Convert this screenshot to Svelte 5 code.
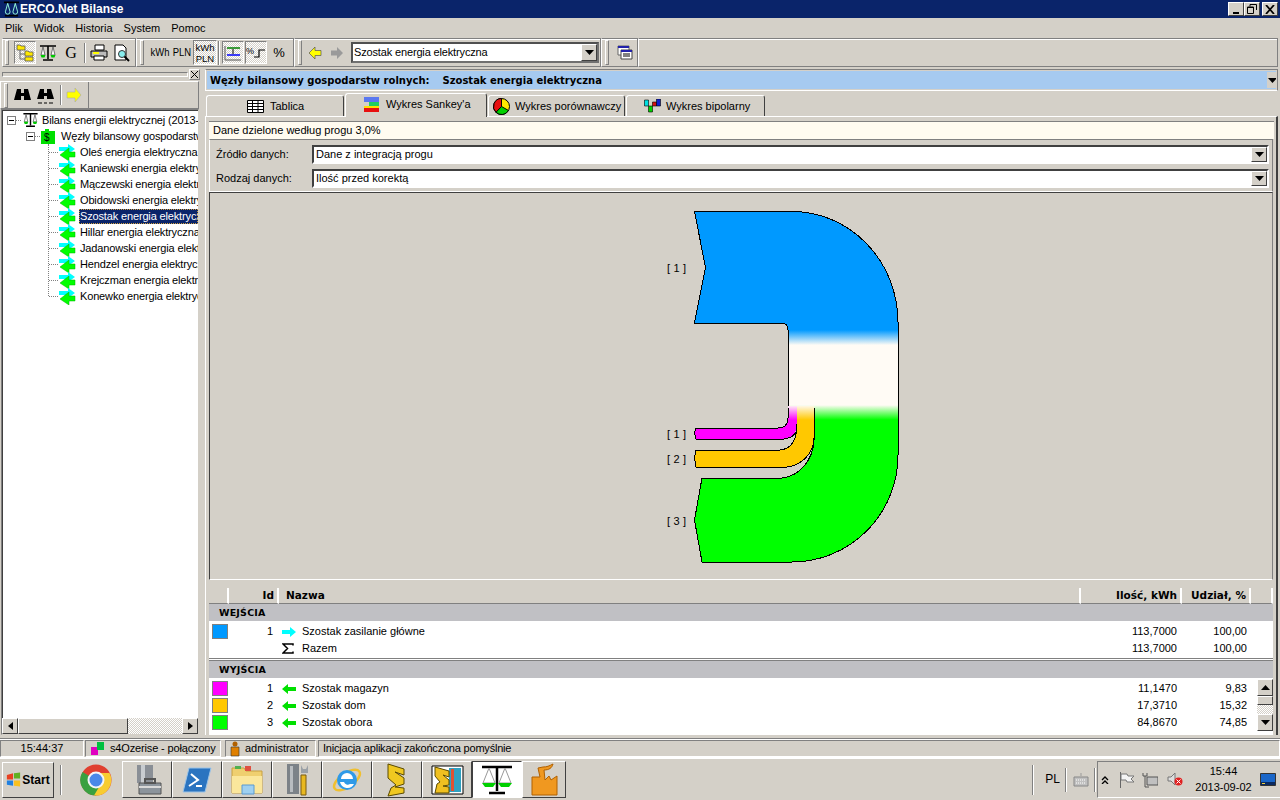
<script>
  const leaves = [
    'Oleś energia elektryczna',
    'Kaniewski energia elektryczna',
    'Mączewski energia elektryczna',
    'Obidowski energia elektryczna',
    'Szostak energia elektryczna',
    'Hillar energia elektryczna',
    'Jadanowski energia elektryczna',
    'Hendzel energia elektryczna',
    'Krejczman energia elektryczna',
    'Konewko energia elektryczna'
  ];
  const outputs = [
    { color: '#ff00ff', id: 1, name: 'Szostak magazyn', qty: '11,1470', pct: '9,83' },
    { color: '#ffc800', id: 2, name: 'Szostak dom', qty: '17,3710', pct: '15,32' },
    { color: '#00ff00', id: 3, name: 'Szostak obora', qty: '84,8670', pct: '74,85' }
  ];
  const menu = ['Plik', 'Widok', 'Historia', 'System', 'Pomoc'];
</script>

{#snippet scales(w, h)}
  <svg width={w} height={h} viewBox="0 0 18 18">
    <path d="M1 2h16M9 2v13M4 16h10" stroke="#000" stroke-width="1.6" fill="none" />
    <path d="M4 3L2 11h4zM14 3l-2 8h4z" fill="#fff" stroke="#555" stroke-width=".8" />
    <path d="M1.500 11h5l-1 2.500h-3zM11.500 11h5l-1 2.500h-3z" fill="#00c800" />
  </svg>
{/snippet}

{#snippet dropArrow()}
  <svg width="9" height="5" viewBox="0 0 9 5"><path d="M0 0h9L4.500 5z" fill="#000" /></svg>
{/snippet}

{#snippet leafIcon()}
  <svg width="18" height="17" viewBox="0 0 18 17">
    <path d="M1 3h9V0l7 5-7 5V7H1z" fill="#00ffff" />
    <path d="M17 8h-6V4L2 11l9 6v-4h6z" fill="#00ff00" stroke="#00b000" stroke-width=".5" />
  </svg>
{/snippet}

<div class="app">
  <header class="titlebar">
    <svg width="17" height="16" viewBox="0 0 18 16">
      <path d="M1 1h16M2 15h14" stroke="#000" stroke-width="2" />
      <path d="M5 2L2.500 11a2.500 2.500 0 0 0 5 0zM13 2l-2.500 9a2.500 2.500 0 0 0 5 0z" fill="#0a246a" stroke="#9fd" stroke-width="1" />
    </svg>
    <span class="title">ERCO.Net Bilanse</span>
    <div class="wincontrols">
      <button class="winbtn"><i class="min"></i></button>
      <button class="winbtn"><svg width="10" height="10" viewBox="0 0 10 10"><path d="M3 .5h6.500V6M3 .5v2M.5 3h6v6.500h-6zM.5 3.500h6" fill="none" stroke="#000" /></svg></button>
      <button class="winbtn close"><svg width="10" height="9" viewBox="0 0 10 9"><path d="M1 0l8 9M9 0L1 9" stroke="#000" stroke-width="1.800" /></svg></button>
    </div>
  </header>

  <nav class="menubar">
    {#each menu as item}<span>{item}</span>{/each}
  </nav>

  <div class="toolbar">
    <div class="tbgroup g1">
      <i class="handle"></i>
      <button class="tb pressed">
        <svg width="18" height="18" viewBox="0 0 18 18"><path d="M4 6v9h5M4 10h5" stroke="#666" fill="none" /><path d="M1 1h3l1 1h4v4H1zM9 7h3l1 1h4v4H9zM9 13h8v4H9z" fill="#ffe800" stroke="#555" stroke-width=".8" /></svg>
      </button>
      <button class="tb">{@render scales(18, 18)}</button>
      <button class="tb gletter">G</button>
      <i class="sep"></i>
      <button class="tb">
        <svg width="18" height="17" viewBox="0 0 18 17"><path d="M5 1h9v5H5z" fill="#fff" stroke="#000" /><path d="M1 7h16v6H1z" fill="#bbb" stroke="#000" /><path d="M4 12h10v4H4z" fill="#fff" stroke="#000" /><path d="M3 9h6" stroke="#ff0" stroke-width="2" /></svg>
      </button>
      <button class="tb">
        <svg width="18" height="18" viewBox="0 0 18 18"><path d="M2 1h8l3 3v12H2z" fill="#fff" stroke="#000" /><circle cx="9" cy="10" r="3.500" fill="#8ee" stroke="#333" /><path d="M11.500 12.500L16 17" stroke="#000" stroke-width="2" /></svg>
      </button>
    </div>
    <div class="tbgroup g2">
      <i class="handle"></i>
      <button class="tb txt">kWh</button>
      <button class="tb txt">PLN</button>
      <button class="tb txt two pressed">kWh<br />PLN</button>
      <i class="thin"></i>
      <button class="tb pressed wide">
        <svg width="18" height="16" viewBox="0 0 18 16"><path d="M1 1v14h16" stroke="#555" fill="none" /><path d="M3 3h13" stroke="#008000" stroke-width="1.500" /><path d="M3 10h13" stroke="#00f" stroke-width="1.500" /><path d="M9 4v5" stroke="#000" /></svg>
      </button>
      <button class="tb pressed wide">
        <svg width="20" height="16" viewBox="0 0 20 16"><text x="0" y="9" font-size="9" font-family="Liberation Sans" fill="#000">%</text><path d="M8 12h5V5h6" stroke="#000" stroke-width="1.200" fill="none" /></svg>
      </button>
      <button class="tb wide pct">%</button>
    </div>
    <div class="tbgroup g3">
      <i class="handle"></i>
      <button class="tb">
        <svg width="14" height="12" viewBox="0 0 14 12"><path d="M13 3.500H7V0L1 6l6 6V8.500h6z" fill="#ffff00" stroke="#555" stroke-width=".7" /></svg>
      </button>
      <button class="tb">
        <svg width="14" height="12" viewBox="0 0 14 12"><path d="M1 3.500h6V0l6 6-6 6V8.500H1z" fill="#9a9a9a" /></svg>
      </button>
      <div class="combo top">
        <span>Szostak energia elektryczna</span>
        <button class="drop">{@render dropArrow()}</button>
      </div>
    </div>
    <div class="tbgroup g4">
      <i class="handle"></i>
      <button class="tb">
        <svg width="16" height="15" viewBox="0 0 16 15"><path d="M1 1h11v9H1z" fill="#fff" stroke="#666" /><path d="M1 1h11v2H1z" fill="#22a" /><path d="M4 5h11v9H4z" fill="#fff" stroke="#444" /><path d="M4 5h11v2H4z" fill="#22a" /><path d="M6 9h7M6 11h7" stroke="#000" /></svg>
      </button>
    </div>
    <div class="tbgroup rest"></div>
  </div>

  <main class="body">
    <aside class="side">
      <div class="dockbar">
        <i class="dockgrip"></i>
        <button class="dockclose"><svg width="7" height="7" viewBox="0 0 7 7"><path d="M0 0l7 7M7 0L0 7" stroke="#000" /></svg></button>
      </div>
      <div class="findbar">
        <div class="findgroup">
          <i class="handle"></i>
          <svg class="bino" width="17" height="14" viewBox="0 0 17 14"><path d="M3 1h4v4h3V1h4l3 11h-7V8H7v4H0z" fill="#000" /></svg>
          <svg class="bino b2" width="17" height="17" viewBox="0 0 17 17"><path d="M3 1h4v4h3V1h4l3 10h-7V8H7v3H0z" fill="#000" /><path d="M1 15h4M7 15h3M12 15h4" stroke="#000" /></svg>
          <i class="sep"></i>
          <svg width="16" height="14" viewBox="0 0 16 14"><path d="M1 4h8V0l6 7-6 7v-4H1z" fill="#ffff00" stroke="#aaa" stroke-width=".6" /></svg>
        </div>
      </div>
      <div class="tree">
        <div class="treelist">
          <div class="node lvl0">
            <span class="box"></span><i class="dash"></i>
            {@render scales(17, 16)}
            <span class="label">Bilans energii elektrycznej (2013-09-02)</span>
          </div>
          <div class="node lvl1">
            <span class="box"></span><i class="dash"></i>
            <svg width="14" height="15" viewBox="0 0 14 15"><path d="M0 2h4V0h4v2h6v13H0z" fill="#00e000" /><text x="3" y="12" font-size="10" font-family="Liberation Sans" fill="#000">$</text></svg>
            <span class="label">Węzły bilansowy gospodarstw rolnych</span>
          </div>
          <div class="leaves">
            {#each leaves as leaf, i}
              <div class="node leaf">
                <i class="dash long"></i>
                {@render leafIcon()}
                <span class="label" class:selected={i === 4}>{leaf}</span>
              </div>
            {/each}
          </div>
        </div>
        <div class="hscroll">
          <button class="sbtn"><svg width="5" height="8" viewBox="0 0 5 8"><path d="M5 0v8L0 4z" /></svg></button>
          <div class="hthumb"></div>
          <div class="htrack"></div>
          <button class="sbtn"><svg width="5" height="8" viewBox="0 0 5 8"><path d="M0 0v8l5-4z" /></svg></button>
        </div>
      </div>
    </aside>

    <section class="content">
      <div class="headerbar">
        <b>Węzły bilansowy gospodarstw rolnych:</b>
        <b class="nodename">Szostak energia elektryczna</b>
        <button class="headerdrop">{@render dropArrow()}</button>
      </div>

      <div class="tabs">
        <div class="tab t1">
          <svg width="17" height="13" viewBox="0 0 17 13"><path d="M.5.5h16v12H.5zM.5 3.500h16M.5 6.500h16M.5 9.500h16M5.500.5v12M11 .5v12" fill="#fff" stroke="#000" /></svg>
          <span>Tablica</span>
        </div>
        <div class="tab t2 active">
          <svg width="17" height="17" viewBox="0 0 17 17"><path d="M1 1h15v5H1z" fill="#5a78f0" /><path d="M6 6h10v4H6z" fill="#20d060" /><path d="M1 10h15v2H1z" fill="#ffe000" /><path d="M1 12h15v4H1z" fill="#e81010" /></svg>
          <span>Wykres Sankey'a</span>
        </div>
        <div class="tab t3">
          <svg width="17" height="17" viewBox="0 0 17 17"><circle cx="8.500" cy="8.500" r="8" fill="#ffe800" stroke="#000" /><path d="M8.500 8.500V.5A8 8 0 0 0 3 14.300z" fill="#e81010" stroke="#000" /><path d="M8.500 8.500L3 14.300A8 8 0 0 0 15.500 12.500z" fill="#00d000" stroke="#000" /></svg>
          <span>Wykres porównawczy</span>
        </div>
        <div class="tab t4">
          <svg width="17" height="14" viewBox="0 0 17 14"><path d="M.5 1h4v6h-4z" fill="#00e0e0" stroke="#000" stroke-width=".6" /><path d="M4.500 7h4v6h-4z" fill="#00d000" stroke="#000" stroke-width=".6" /><path d="M8.500 3h4v4h-4z" fill="#d81010" stroke="#000" stroke-width=".6" /><path d="M12.500 0h4v7h-4z" fill="#1020d0" stroke="#000" stroke-width=".6" /></svg>
          <span>Wykres bipolarny</span>
        </div>
      </div>

      <div class="page">
        <div class="info">Dane dzielone według progu 3,0%</div>

        <div class="filters">
          <div class="filter">
            <span class="flabel">Źródło danych:</span>
            <div class="combo">
              <span>Dane z integracją progu</span>
              <button class="drop">{@render dropArrow()}</button>
            </div>
          </div>
          <div class="filter">
            <span class="flabel">Rodzaj danych:</span>
            <div class="combo">
              <span>Ilość przed korektą</span>
              <button class="drop">{@render dropArrow()}</button>
            </div>
          </div>
        </div>

        <div class="canvas">
          <svg width="1062" height="386" viewBox="210 193 1062 386" shape-rendering="crispEdges">
            <defs>
              <linearGradient id="mainfill" gradientUnits="userSpaceOnUse" x1="0" y1="211" x2="0" y2="562">
                <stop offset="0.339" stop-color="#0099ff" />
                <stop offset="0.382" stop-color="#fffbf5" />
                <stop offset="0.553" stop-color="#fffbf5" />
                <stop offset="0.595" stop-color="#00ff00" />
              </linearGradient>
              <linearGradient id="pinkfill" gradientUnits="userSpaceOnUse" x1="0" y1="405" x2="0" y2="420">
                <stop offset="0" stop-color="#fffbf5" />
                <stop offset="1" stop-color="#ff00ff" />
              </linearGradient>
              <linearGradient id="orangefill" gradientUnits="userSpaceOnUse" x1="0" y1="405" x2="0" y2="420">
                <stop offset="0" stop-color="#fffbf5" />
                <stop offset="1" stop-color="#ffc800" />
              </linearGradient>
            </defs>

            <path
              d="M788 408V330Q788 323 781 323H694.500L705.500 267.500L694.500 211.500H792A106 111 0 0 1 898 322V455A106 107 0 0 1 792 562H702L694.500 520L702 478H782C800 476 813 460 814 440V408"
              fill="url(#mainfill)" stroke="#000" stroke-width="1"
            />
            <path d="M788 406V418Q788 428 778 428H696L694.500 433L696 439H784Q797 437 797 424V406Z" fill="url(#pinkfill)" />
            <path d="M788 408V418Q788 428 778 428H696L694.500 433L696 439H784Q797 437 797 427" fill="none" stroke="#000" />
            <path d="M797 406V422Q797 448 780 450H696L694.500 458L696 467H787C803 465 814 452 814 438V406Z" fill="url(#orangefill)" />
            <path d="M797 424C797 442 790 449 780 450H696L694.500 458L696 467H787C803 465 814 452 814 438V408" fill="none" stroke="#000" />

            <g class="sk-label" shape-rendering="auto">
              <text x="667" y="272">[ 1 ]</text>
              <text x="667" y="438">[ 1 ]</text>
              <text x="667" y="463">[ 2 ]</text>
              <text x="667" y="525">[ 3 ]</text>
            </g>
          </svg>
        </div>

        <div class="table">
          <div class="thead">
            <span></span>
            <span class="r">Id</span>
            <span>Nazwa</span>
            <span class="r">Ilość, kWh</span>
            <span class="r">Udział, %</span>
            <span></span>
          </div>

          <div class="section">WEJŚCIA</div>
          <div class="rows">
            <div class="row">
              <i class="swatch blue"></i>
              <span class="r">1</span>
              <svg class="ricon" width="14" height="10" viewBox="0 0 14 10"><path d="M0 3h8V0l6 5-6 5V7H0z" fill="#00ffff" /></svg>
              <span>Szostak zasilanie główne</span>
              <span class="r">113,7000</span>
              <span class="r">100,00</span>
            </div>
            <div class="row">
              <i></i>
              <span></span>
              <svg class="ricon" width="12" height="11" viewBox="0 0 12 11"><path d="M11 2.500V1H1l4.500 4.500L1 10h10V8.500" fill="none" stroke="#000" stroke-width="1.500" /></svg>
              <span>Razem</span>
              <span class="r">113,7000</span>
              <span class="r">100,00</span>
            </div>
          </div>

          <div class="divider"></div>

          <div class="section">WYJŚCIA</div>
          <div class="rows out">
            {#each outputs as row}
              <div class="row">
                <i class="swatch" style="background: {row.color}"></i>
                <span class="r">{row.id}</span>
                <svg class="ricon" width="14" height="10" viewBox="0 0 14 10"><path d="M14 3H6V0L0 5l6 5V7h8z" fill="#00e000" /></svg>
                <span>{row.name}</span>
                <span class="r">{row.qty}</span>
                <span class="r">{row.pct}</span>
              </div>
            {/each}
            <div class="vscroll">
              <button class="sbtn"><svg width="9" height="5" viewBox="0 0 9 5"><path d="M0 5h9L4.500 0z" /></svg></button>
              <div class="vthumb"></div>
              <div class="vtrack"></div>
              <button class="sbtn"><svg width="9" height="5" viewBox="0 0 9 5"><path d="M0 0h9L4.500 5z" /></svg></button>
            </div>
          </div>
        </div>
      </div>
    </section>
  </main>

  <footer class="status">
    <div class="cell c1">15:44:37</div>
    <div class="cell c2">
      <svg width="15" height="15" viewBox="0 0 15 15"><path d="M1 6h7v8H1z" fill="#e000c0" /><path d="M7 1h7v8H7z" fill="#00c040" /></svg>
      <span>s4Ozerise - połączony</span>
    </div>
    <div class="cell c3">
      <svg width="10" height="16" viewBox="0 0 10 16"><circle cx="5" cy="3" r="2.500" fill="#b06000" /><path d="M1 6h8v9H1z" fill="#e08000" stroke="#333" stroke-width=".6" /></svg>
      <span>administrator</span>
    </div>
    <div class="cell c4">Inicjacja aplikacji zakończona pomyślnie</div>
  </footer>

  <div class="taskbar">
    <button class="start">
      <svg width="15" height="15" viewBox="0 0 17 16"><path d="M1 3l7-2v7H1z" fill="#e84020" /><path d="M9 1l7-1v7H9z" fill="#60b020" /><path d="M1 9h7v6l-7-1z" fill="#2080e0" /><path d="M9 9h7v7l-7-1z" fill="#f8c020" /></svg>
      <span>Start</span>
    </button>
    <i class="taskgrip"></i>
    <div class="task plain">
      <svg width="32" height="32" viewBox="0 0 32 32">
        <circle cx="16" cy="16" r="15.500" fill="#e04030" />
        <path d="M16 16L2.500 8A15.500 15.500 0 0 0 16 31.500L24 18z" fill="#3aa040" />
        <path d="M16 9H29.500A15.500 15.500 0 0 1 14 31.500L22 18z" fill="#f8cc30" />
        <circle cx="16" cy="16" r="7.500" fill="#4a88e8" stroke="#f4f4f4" stroke-width="2" />
      </svg>
    </div>
    <div class="task">
      <svg width="32" height="32" viewBox="0 0 32 32"><path d="M6 1h16v18H6z" fill="#8a8f96" /><path d="M10 1h4v18h-4z" fill="#c8ccd0" /><path d="M8 19h22v11H8z" fill="#8c949c" stroke="#555" /><path d="M14 15h10v4H14z" fill="none" stroke="#555" stroke-width="2" /><path d="M8 23h22" stroke="#d8d8d8" stroke-width="2" /></svg>
    </div>
    <div class="task">
      <svg width="30" height="30" viewBox="0 0 30 30"><path d="M7 3h22l-6 24H1z" fill="#2b74c0" stroke="#9cc4e8" /><path d="M9 9l7 6-9 6M14 21h6" stroke="#fff" stroke-width="2" fill="none" /></svg>
    </div>
    <div class="task">
      <svg width="32" height="30" viewBox="0 0 32 30"><path d="M1 3h12l2 3h16v22H1z" fill="#efcf6f" stroke="#c8a040" /><path d="M1 11h30v17H1z" fill="#fbe79c" /><path d="M11 20h12v9H11z" fill="#9fd0f0" stroke="#5a9ad0" /><path d="M4 1h6v3H4z" fill="#50b050" /><path d="M14 1h6v5h-6z" fill="#e05040" /></svg>
    </div>
    <div class="task">
      <svg width="24" height="34" viewBox="0 0 24 34"><path d="M2 1h12v30H2z" fill="#7c8288" /><path d="M5 3h3v26H5z" fill="#b8bcc0" /><path d="M16 12h5v20h-5z" fill="#e8b820" stroke="#7a5a10" /><path d="M16 2l2 4 3 0 2-4v8h-7z" fill="#9aa0a6" /></svg>
    </div>
    <div class="task">
      <svg width="32" height="32" viewBox="0 0 32 32"><ellipse cx="16" cy="16" rx="15" ry="7" transform="rotate(-35 16 16)" fill="none" stroke="#f0c030" stroke-width="2.500" /><circle cx="16" cy="16" r="10" fill="#2f9ae8" /><path d="M10 15h12a6 6 0 0 0-12 0zM9 18a7.500 7.500 0 0 0 14 2h-4a4 4 0 0 1-6-2z" fill="#fff" /></svg>
    </div>
    <div class="task">
      <svg width="24" height="34" viewBox="0 0 24 34"><path d="M3 1l16 5v6l-9-3 9 6v6l-9 3 9 1v5L3 33l3-8 5-3-8-7z" fill="#f0c820" stroke="#5a4a00" /></svg>
    </div>
    <div class="task">
      <svg width="33" height="33" viewBox="0 0 33 33"><path d="M1 3h31v28H1z" fill="#fff" stroke="#000" /><path d="M18 5h12v24H18z" fill="#30a0c0" /><path d="M4 4l14 4v6l-6-2 6 5v5l-6 1 6 1v6L4 30l2-9 3-2-5-6z" fill="#f0c020" stroke="#5a4a00" /><path d="M20 6h3v22h-3z" fill="#e05030" /></svg>
    </div>
    <div class="task active">
      <svg width="34" height="32" viewBox="0 0 34 32">
        <path d="M2 3h30M17 3v24M9 29h16" stroke="#000" stroke-width="2.500" />
        <path d="M9 4L3 19h12zM25 4l-6 15h12z" fill="#fff" stroke="#999" />
        <path d="M2 19h14l-3 4H5zM18 19h14l-3 4h-8z" fill="#00d000" />
      </svg>
    </div>
    <div class="task last">
      <svg width="30" height="34" viewBox="0 0 30 34"><path d="M3 14h8L9 5l5-1c4 0 6-1 10-3-1 4-4 6-9 6l1 10 4-4 2 4 6-4v19H3z" fill="#f09820" stroke="#b06000" /></svg>
    </div>

    <div class="tray-left">
      <i class="taskgrip"></i>
      <span class="lang">PL</span>
      <i class="traysep"></i>
      <svg class="kbd" width="16" height="14" viewBox="0 0 16 14"><path d="M8 0v3" stroke="#999" /><path d="M1 4h14v9H1z" fill="#c0c0c0" stroke="#888" /><path d="M3 7h10M3 10h10" stroke="#fff" stroke-dasharray="1 1" /></svg>
      <i class="traysep"></i>
    </div>
    <div class="tray">
      <svg width="8" height="8" viewBox="0 0 8 8"><path d="M1 4l3-3 3 3M1 8l3-3 3 3" fill="none" stroke="#000" stroke-width="1.300" /></svg>
      <svg class="t-flag" width="16" height="16" viewBox="0 0 16 16"><path d="M1.500 0v16" stroke="#666" /><path d="M2 2h6l1 2h6l-3 3 3 3H8L7 8H2z" fill="#f4f4f4" stroke="#777" /></svg>
      <svg class="t-net" width="16" height="16" viewBox="0 0 16 16"><path d="M1 1v3h4V1M3 4v11h4" fill="none" stroke="#555" /><path d="M5 5h11v8H5z" fill="#c0c0c0" stroke="#555" /></svg>
      <svg class="t-snd" width="16" height="15" viewBox="0 0 16 15"><path d="M1 5h3l4-4v12L4 9H1z" fill="#ddd" stroke="#777" /><circle cx="11.500" cy="9.500" r="4" fill="#e02020" /><path d="M9.500 7.500l4 4M13.500 7.500l-4 4" stroke="#fff" /></svg>
      <div class="clock"><span>15:44</span><span>2013-09-02</span></div>
      <svg class="t-desk" width="16" height="14" viewBox="0 0 16 14"><path d="M.5.500h15v12H.5z" fill="#1a66c8" stroke="#333" /><path d="M1 9h14v3H1z" fill="#0a2a60" /><path d="M2 10h3v1H2z" fill="#f0d040" /></svg>
    </div>
  </div>
</div>

<style>
  :global(body) { margin: 0; background: #d4d0c8; }
  button { padding: 0; margin: 0; font: inherit; color: inherit; background: #d4d0c8; }
  i { display: block; }
  svg { flex: none; }

  .app {
    width: 1280px; height: 800px; overflow: hidden; display: flex; flex-direction: column;
    background: #d4d0c8; color: #000; font: 11px/13px "Liberation Sans", Arial, sans-serif;
  }

  .titlebar { height: 18px; flex: none; background: #0a246a; display: flex; align-items: center; padding-left: 3px; }
  .title { color: #fff; font: bold 12px/18px "Liberation Sans", sans-serif; white-space: nowrap; }
  .wincontrols { margin-left: auto; display: flex; align-items: center; margin-right: 2px; }
  .winbtn {
    width: 16px; height: 14px; display: flex; align-items: center; justify-content: center; box-sizing: border-box;
    border: 1px solid; border-color: #fff #404040 #404040 #fff;
  }
  .winbtn.close { margin-left: 2px; }
  .min { width: 6px; height: 2px; background: #000; margin-top: 7px; margin-right: 1px; }

  .menubar { height: 20px; flex: none; display: flex; align-items: center; gap: 11px; padding-left: 5px; }

  .toolbar { height: 29px; flex: none; display: flex; padding-right: 2px; }
  .tbgroup {
    display: flex; align-items: center; box-sizing: border-box; height: 29px;
    border: 1px solid; border-color: #808080 #808080 #808080 #fff;
    box-shadow: inset 0 1px 0 #fff;
  }
  .g1 { width: 134px; margin-left: 2px; padding-left: 2px; }
  .g2 { width: 158px; padding-left: 3px; }
  .g3 { width: 307px; padding-left: 3px; }
  .g3 .handle { margin-right: 2px; }
  .g4 { width: 37px; padding-left: 3px; }
  .rest { flex: 1; }
  .handle {
    width: 2px; height: 23px; flex: none; border: 1px solid; border-color: #fff #808080 #808080 #fff; margin-right: 5px;
  }
  .tb {
    width: 22px; height: 23px; flex: none; border: 1px solid transparent; box-sizing: border-box;
    display: flex; align-items: center; justify-content: center; line-height: 11px;
  }
  .g1 .tb + .tb { margin-left: 1px; }
  .tb.pressed {
    border-color: #808080 #fff #fff #808080;
    background: repeating-conic-gradient(#d4d0c8 0 25%, #fff 0 50%) 0 0 / 2px 2px;
  }
  .tb.txt { font-size: 10.500px; transform: scaleX(0.9); }
  .tb.two { width: 24px; height: 25px; transform: none; font-size: 9.500px; text-align: center; }
  .tb.wide { margin-left: 1px; }
  .pct { font-size: 13px; }
  .gletter { font: 16px "Liberation Serif", serif; }
  .sep { width: 1px; height: 20px; flex: none; background: #808080; border-right: 1px solid #fff; margin: 0 2px; }
  .thin { width: 1px; height: 24px; flex: none; background: #808080; border-right: 1px solid #fff; margin: 0 1px; }

  .combo {
    flex: 1; height: 19px; box-sizing: border-box; background: #fff; display: flex; align-items: center;
    border: 2px solid; border-color: #404040 #d4d0c8 #d4d0c8 #404040;
    padding-left: 2px;
  }
  .combo span { flex: 1; white-space: nowrap; }
  .combo.top {
    flex: none; width: 248px; height: 21px; margin-left: 3px; border-color: #505050 #707070 #707070 #505050;
    padding-left: 1px; letter-spacing: -0.15px;
  }
  .drop {
    width: 16px; height: 100%; flex: none; box-sizing: border-box; display: flex; align-items: center; justify-content: center;
    border: 1px solid; border-color: #fff #404040 #404040 #fff;
  }

  .body { flex: 1; min-height: 0; display: flex; }

  .side { width: 200px; flex: none; display: flex; flex-direction: column; margin-top: 1px; }
  .dockbar { height: 13px; display: flex; align-items: center; padding-left: 2px; flex: none; }
  .dockgrip { flex: 1; height: 3px; border: 1px solid; border-color: #808080 #fff #fff #808080; }
  .dockclose {
    width: 11px; height: 11px; margin-left: 1px; box-sizing: border-box; border: 1px solid; border-color: #fff #808080 #808080 #fff;
    display: flex; align-items: center; justify-content: center;
  }
  .findbar { height: 28px; flex: none; display: flex; border: 1px solid; border-color: #fff #808080 #808080 #fff; box-sizing: border-box; margin-right: 1px; }
  .findgroup { width: 88px; display: flex; align-items: center; padding-left: 3px; gap: 4px; box-sizing: border-box; border-right: 1px solid #808080; }
  .findgroup .handle { margin-right: 2px; }
  .findgroup .sep { margin-right: 0; }
  .b2 { margin-left: 2px; margin-top: 2px; }
  .tree {
    flex: 1; min-height: 0; display: flex; flex-direction: column; background: #fff; margin: 0 1px 3px 1px;
    border: 1px solid; border-color: #808080 #d4d0c8 #d4d0c8 #808080; box-shadow: inset 1px 1px 0 #404040;
    box-sizing: border-box;
  }
  .treelist { flex: 1; min-height: 0; overflow: hidden; padding: 2px 0 0 5px; letter-spacing: -0.15px; }
  .node { height: 16px; display: flex; align-items: center; white-space: nowrap; }
  .lvl1 { padding-left: 19px; }
  .box { width: 9px; height: 9px; box-sizing: border-box; border: 1px solid #808080; flex: none; position: relative; }
  .box::after { content: ""; position: absolute; left: 1px; right: 1px; top: 3px; height: 1px; background: #000; }
  .dash { width: 5px; flex: none; border-top: 1px dotted #808080; margin-right: 1px; }
  .lvl0 .label { margin-left: 3px; }
  .lvl1 .label { margin-left: 6px; }
  .leaves { margin-left: 41px; border-left: 1px dotted #808080; height: 152px; }
  .leaf .dash.long { width: 9px; margin-right: 0; }
  .leaf .label { margin-left: 3px; padding: 1px 1px; }
  .selected { background: #0a246a; color: #fff; outline: 1px dotted #d0a040; outline-offset: -1px; width: 118px; overflow: hidden; }

  .hscroll { height: 16px; flex: none; display: flex; }
  .sbtn {
    width: 16px; height: 16px; flex: none; box-sizing: border-box; display: flex; align-items: center; justify-content: center;
    border: 1px solid; border-color: #fff #404040 #404040 #fff;
  }
  .hthumb { width: 110px; border: 1px solid; border-color: #fff #404040 #404040 #fff; box-sizing: border-box; background: #d4d0c8; }
  .htrack { flex: 1; background: repeating-conic-gradient(#d4d0c8 0 25%, #fff 0 50%) 0 0 / 2px 2px; }

  .content { flex: 1; min-width: 0; display: flex; flex-direction: column; padding: 2px 2px 0 5px; }
  .headerbar {
    height: 22px; flex: none; box-sizing: border-box; background: #a6caf0; display: flex; align-items: center; padding-left: 4px;
    border: 1px solid; border-color: #808080 #808080 #fff #fff; outline: 1px solid #d4d0c8; outline-offset: -2px;
    font: bold 10px "DejaVu Sans", sans-serif; white-space: nowrap;
  }
  .nodename { margin-left: 13px; }
  .headerdrop { margin-left: auto; width: 10px; height: 16px; border: 0; display: flex; align-items: center; justify-content: center; overflow: hidden; }

  .tabs { height: 25px; flex: none; display: flex; align-items: flex-end; padding-left: 1px; }
  .tab {
    height: 21px; box-sizing: border-box; display: flex; align-items: center; white-space: nowrap;
    border: 1px solid; border-bottom: 0; border-color: #fff #404040 #fff #fff; border-radius: 3px 3px 0 0; margin-right: 1px;
  }
  .tab.active { height: 24px; margin-bottom: -1px; z-index: 1; position: relative; background: #d4d0c8; padding-bottom: 2px; }
  .t1 { width: 138px; padding-left: 40px; gap: 6px; }
  .t2 { width: 142px; padding-left: 17px; gap: 6px; }
  .t3 { width: 137px; padding-left: 4px; gap: 5px; }
  .t4 { width: 139px; padding-left: 17px; gap: 5px; }

  .page {
    flex: 1; min-height: 0; display: flex; flex-direction: column; border-top: 1px solid #fff;
    border-right: 2px solid #404040; border-left: 1px solid #fff; padding: 4px 2px 0 3px; margin-bottom: 3px;
  }
  .info {
    height: 18px; flex: none; background: #fffbf0; display: flex; align-items: center; padding-left: 4px; box-sizing: border-box;
    border-top: 1px solid #808080;
  }
  .filters {
    height: 53px; flex: none; box-sizing: border-box; border: 1px solid; border-color: #808080 #808080 #fff #fff; padding: 5px 3px 0 3px;
    margin-right: 1px; display: flex; flex-direction: column; gap: 5px;
  }
  .filter { display: flex; align-items: center; }
  .flabel { width: 99px; flex: none; padding-left: 3px; box-sizing: border-box; }
  .filter .combo { height: 19px; border-color: #404040 #fff #fff #404040; }
  .canvas {
    height: 388px; flex: none; box-sizing: border-box; border: 1px solid; border-color: #404040 #808080 #fff #404040; overflow: hidden;
    margin-right: 1px;
  }
  .canvas svg { display: block; }
  .sk-label text { font: 11px "Liberation Sans", sans-serif; letter-spacing: 0.2px; fill: #000; }

  .table { flex: 1; min-height: 0; margin-top: 8px; margin-right: 1px; overflow: hidden; background: #fff; }
  .thead {
    height: 16px; display: grid; grid-template-columns: 20px 50px 802px 101px 69px 1fr; background: #d4d0c8;
    font: bold 10.500px/15px "DejaVu Sans", sans-serif;
  }
  .thead span { border-right: 2px solid #fff; border-bottom: 1px solid #808080; padding: 0 3px 0 7px; box-sizing: border-box; white-space: nowrap; }
  .thead .r { text-align: right; padding-left: 0; }
  .section {
    height: 17px; background: #c0c0c4; font: bold 9.500px/17px "DejaVu Sans", sans-serif; padding-left: 10px; letter-spacing: 0.2px;
  }
  .rows { padding-top: 2px; position: relative; }
  .row { height: 17px; display: grid; grid-template-columns: 20px 44px 29px 775px 100px 70px 26px; align-items: center; }
  .row .r { text-align: right; }
  .swatch { width: 14px; height: 13px; margin-left: 3px; border: 1px solid #808080; }
  .swatch.blue { background: #0099ff; }
  .ricon { margin-left: 9px; }
  .divider { height: 3px; margin-top: 1px; box-sizing: border-box; border-top: 1px solid #808080; border-bottom: 1px solid #808080; background: #fff; }

  .vscroll { position: absolute; right: 0; top: 1px; width: 16px; height: 52px; display: flex; flex-direction: column; }
  .vscroll .sbtn { height: 17px; }
  .vthumb { height: 9px; box-sizing: border-box; border: 1px solid; border-color: #fff #404040 #404040 #fff; background: #d4d0c8; }
  .vtrack { flex: 1; background: repeating-conic-gradient(#d4d0c8 0 25%, #fff 0 50%) 0 0 / 2px 2px; }

  .status { height: 19px; flex: none; display: flex; gap: 1px; border-top: 1px solid #808080; box-shadow: inset 0 1px 0 #fff; padding-top: 1px; box-sizing: border-box; }
  .cell {
    height: 17px; box-sizing: border-box; border: 1px solid; border-color: #808080 #fff #fff #808080; display: flex; align-items: center;
    gap: 5px; padding-left: 4px; white-space: nowrap;
  }
  .c1 { width: 84px; justify-content: center; padding-left: 0; }
  .c2 { width: 136px; letter-spacing: -0.15px; }
  .c3 { width: 91px; margin-left: 3px; }
  .c4 { flex: 1; margin-left: 1px; letter-spacing: -0.2px; }

  .taskbar { height: 43px; flex: none; display: flex; align-items: center; box-shadow: inset 0 2px 0 #fff; box-sizing: border-box; padding-top: 2px; }
  .start {
    width: 52px; height: 36px; margin-left: 2px; flex: none; box-sizing: border-box; border: 1px solid; border-color: #fff #404040 #404040 #fff;
    display: flex; align-items: center; justify-content: center; gap: 1px; font: bold 12px "Liberation Sans", sans-serif;
  }
  .taskgrip { width: 1px; height: 30px; flex: none; background: #808080; border-right: 1px solid #fff; margin: 0 0 0 6px; }
  .task {
    width: 50px; height: 37px; flex: none; box-sizing: border-box; display: flex; align-items: center; justify-content: center;
    border: 1px solid; border-color: #fff #404040 #404040 #fff;
  }
  .task.plain { width: 52px; margin-left: 8px; border-color: transparent; }
  .task.active { background: #fff; border-color: #404040 #fff #fff #404040; }
  .task.last { width: 44px; }
  .tray-left { margin-left: auto; display: flex; align-items: center; height: 30px; }
  .lang { margin-left: 11px; font-size: 12px; }
  .traysep { width: 1px; height: 24px; background: #808080; border-right: 1px solid #fff; }
  .lang + .traysep { margin-left: 5px; }
  .kbd { margin: 0 5px 0 6px; }
  .tray {
    width: 183px; height: 37px; margin-left: 1px; box-sizing: border-box; display: flex; align-items: center; padding-left: 3px;
    border: 1px solid; border-color: #808080 #fff #fff #808080; border-right: 0;
  }
  .t-flag { margin-left: 10px; }
  .t-net { margin-left: 7px; }
  .t-snd { margin-left: 9px; }
  .clock { display: flex; flex-direction: column; align-items: center; width: 65px; margin-left: 8px; gap: 3px; }
  .t-desk { margin-left: 4px; }
</style>
